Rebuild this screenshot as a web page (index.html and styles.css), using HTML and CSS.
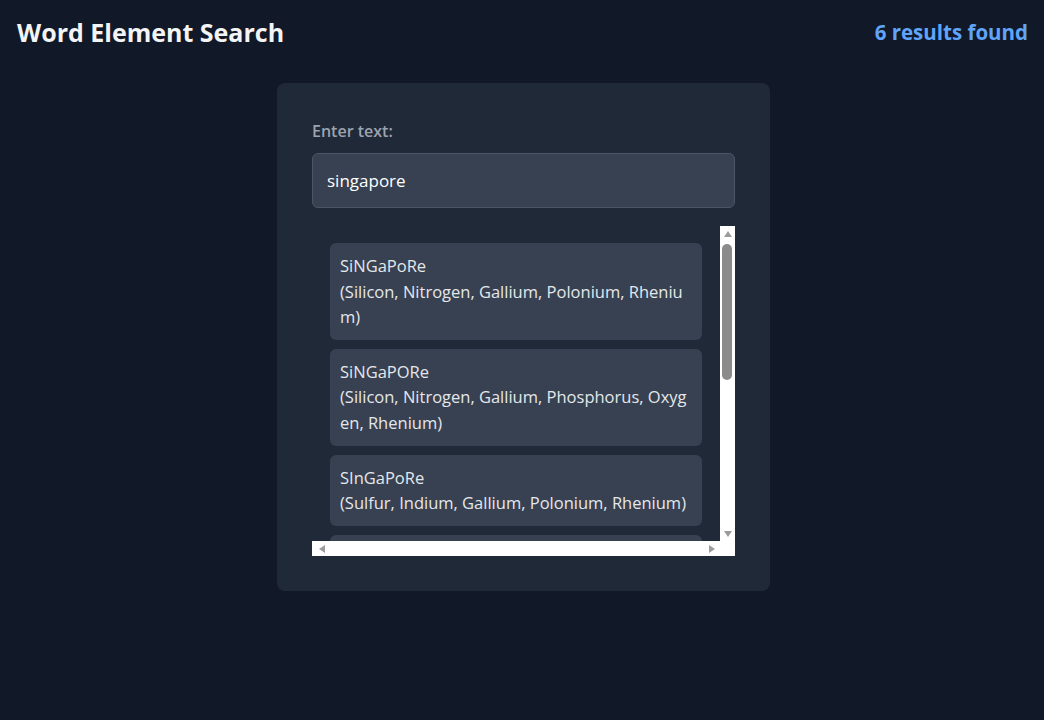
FILE: index.html
```html
<!DOCTYPE html>
<html>
	<head>
		<meta charset="UTF-8">
		<title>Word Element Search</title>
		<link rel="stylesheet" href="styles.css">
	</head>
	<body>
		<div class="top">
			<h1>Word Element Search</h1>
			<span class="count">6 results found</span>
		</div>
		<div class="main">
			<div class="card">
				<label for="word">Enter text:</label>
				<input type="text" id="word" value="singapore">
				<div class="frame">
					<div class="results">
						<div class="item">SiNGaPoRe<br>(Silicon, Nitrogen, Gallium, Polonium, Rhenium)</div>
						<div class="item">SiNGaPORe<br>(Silicon, Nitrogen, Gallium, Phosphorus, Oxygen, Rhenium)</div>
						<div class="item">SInGaPoRe<br>(Sulfur, Indium, Gallium, Polonium, Rhenium)</div>
						<div class="item">SInGaPORe<br>(Sulfur, Indium, Gallium, Phosphorus, Oxygen, Rhenium)</div>
						<div class="item">SINGaPoRe<br>(Sulfur, Iodine, Nitrogen, Gallium, Polonium, Rhenium)</div>
						<div class="item">SINGaPORe<br>(Sulfur, Iodine, Nitrogen, Gallium, Phosphorus, Oxygen, Rhenium)</div>
					</div>
					<!-- scrollbars -->
					<div class="vbar">
						<span class="btn"><i class="arr up"></i></span>
						<div class="track"><div class="thumb"></div></div>
						<span class="btn"><i class="arr down"></i></span>
					</div>
					<div class="hbar">
						<span class="btn"><i class="arr left"></i></span>
						<span class="btn"><i class="arr right"></i></span>
					</div>
					<div class="corner"></div>
				</div>
			</div>
		</div>
	</body>
</html>
```

FILE: styles.css
```css
*{
	margin: 0;
	padding: 0;
	box-sizing: border-box;
}
body{
	background: #111827;
	color: #f3f4f6;
	font-family: "Open Sans", "Noto Sans", sans-serif;
}
.top{
	display: flex;
	justify-content: space-between;
	align-items: center;
	padding: 16px 16px 16px 17px;
}
.top h1{
	font-size: 25px;
	line-height: 32px;
	font-weight: 700;
}
.count{
	color: #60a5fa;
	font-size: 20.5px;
	font-weight: 700;
}
.main{
	padding: 19px 0 0 3px;
}
.card{
	width: 493px;
	margin: 0 auto;
	padding: 36px 35px 35px;
	background: #1f2937;
	border-radius: 8px;
}
.card label{
	display: block;
	color: #9ca3af;
	font-size: 16px;
	line-height: 24px;
	font-weight: 600;
	margin-bottom: 10px;
}
.card input{
	display: block;
	width: 100%;
	height: 55px;
	padding: 0 14px;
	background: #374151;
	border: 1px solid #4b5563;
	border-radius: 6px;
	color: #fff;
	font-family: inherit;
	font-size: 17px;
	outline: none;
}
.frame{
	display: grid;
	grid-template-columns: 1fr 15px;
	grid-template-rows: 315px 15px;
	margin-top: 18px;
}
.results{
	overflow: hidden;
	padding: 17px 18px;
}
.item{
	background: #374151;
	border-radius: 6px;
	padding: 10px;
	margin-bottom: 9px;
	font-size: 16.5px;
	line-height: 25.6px;
	color: #e5e7eb;
	word-break: break-all;
}
.item:last-child{
	margin-bottom: 0;
}

/* scrollbars */
.vbar, .hbar, .corner{
	background: #fff;
}
.vbar{
	display: flex;
	flex-direction: column;
}
.hbar{
	display: flex;
	justify-content: space-between;
	padding: 0 1px 0 2px;
}
.btn{
	width: 15px;
	height: 15px;
	display: flex;
	align-items: center;
	justify-content: center;
}
.track{
	flex: 1;
	padding: 3px 3px 0 2px;
}
.thumb{
	height: 136px;
	background: #8b8b8b;
	border-radius: 5px;
}
.arr{
	width: 0;
	height: 0;
	border: 0 solid transparent;
}
.arr.up{
	border-width: 0 4.5px 6px;
	border-bottom-color: #9c9c9c;
}
.arr.down{
	border-width: 6px 4.5px 0;
	border-top-color: #9c9c9c;
}
.arr.left{
	border-width: 4.5px 6px 4.5px 0;
	border-right-color: #9c9c9c;
}
.arr.right{
	border-width: 4.5px 0 4.5px 6px;
	border-left-color: #9c9c9c;
}
```
